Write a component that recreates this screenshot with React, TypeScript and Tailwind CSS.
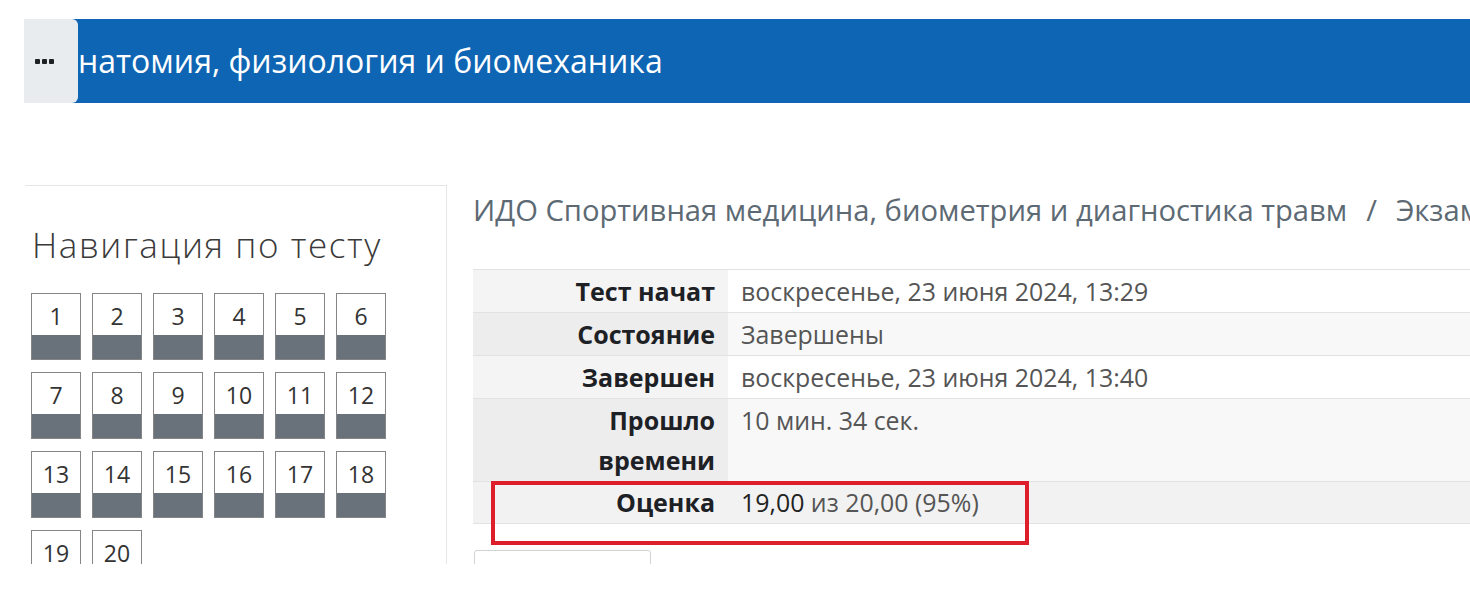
const questions = Array.from({ length: 20 }, (_, i) => i + 1);

const rows = [
  { label: ["Тест начат"], value: "воскресенье, 23 июня 2024, 13:29", lbg: "bg-[#f4f4f4]", vbg: "bg-white" },
  { label: ["Состояние"], value: "Завершены", lbg: "bg-[#ededed]", vbg: "bg-[#f8f8f8]" },
  { label: ["Завершен"], value: "воскресенье, 23 июня 2024, 13:40", lbg: "bg-[#f4f4f4]", vbg: "bg-white" },
  { label: ["Прошло", "времени"], value: "10 мин. 34 сек.", lbg: "bg-[#ededed]", vbg: "bg-[#f8f8f8]" },
];

const App = () => {
  return (
    <div className="w-[1470px] h-[600px] bg-white overflow-hidden font-['Open_Sans',sans-serif]">
      <div className="pt-[19px] pl-[24px]">
        <div className="h-[84px] bg-[#0e65b4] flex items-center">
          <div className="w-[54px] h-full bg-[#e9ecef] rounded-r-[6px] flex items-center pl-[11px] gap-[2px]">
            <span className="w-[5px] h-[5px] rounded-[1px] bg-[#1d2125]"></span>
            <span className="w-[5px] h-[5px] rounded-[1px] bg-[#1d2125]"></span>
            <span className="w-[5px] h-[5px] rounded-[1px] bg-[#1d2125]"></span>
          </div>
          <h1 className="text-white text-[32px] leading-[40px] whitespace-nowrap">
            натомия, физиология и биомеханика
          </h1>
        </div>
      </div>

      <div className="mt-[82px] h-[379px] overflow-hidden flex">
        <aside className="ml-[25px] w-[422px] shrink-0 border-t border-r border-[#e6e6e6]">
          <h2 className="mt-[38px] pl-[7px] text-[35px] leading-[42px] tracking-[1.6px] font-light text-[#3a3a3a] whitespace-nowrap">
            Навигация по тесту
          </h2>
          <div className="mt-[27px] ml-[6px] grid grid-cols-[repeat(6,50px)] gap-x-[11px] gap-y-[12px]">
            {questions.map((n) => (
              <div key={n} className="w-[50px] h-[67px] border border-[#858585] flex flex-col">
                <div className="flex-1 flex items-center justify-center pt-[4px] text-[23px] text-[#333]">{n}</div>
                <div className="h-[24px] bg-[#69727a]"></div>
              </div>
            ))}
          </div>
        </aside>

        <main className="ml-[26px] flex-1 min-w-0 relative">
          <div className="mt-[5px] text-[29.2px] leading-[40px] text-[#5d6a74] whitespace-nowrap">
            ИДО Спортивная медицина, биометрия и диагностика травм
            <span className="mx-[19px]">/</span>
            Экзамен
          </div>

          <div className="mt-[39px] border-b border-[#e2e2e2] text-[24.9px]">
            {rows.map((r, i) => (
              <div key={i} className="flex border-t border-[#e2e2e2]">
                <div className={`w-[255px] shrink-0 ${r.lbg} py-px pr-[13px] text-right text-[25px] font-bold leading-[40px] text-[#1d2125]`}>
                  {r.label.map((l) => (
                    <div key={l}>{l}</div>
                  ))}
                </div>
                <div className={`flex-1 ${r.vbg} py-px pl-[13px] leading-[40px] text-[#555]`}>{r.value}</div>
              </div>
            ))}
            <div className="flex border-t border-[#e2e2e2] bg-[#f2f2f2]">
              <div className="w-[255px] shrink-0 py-px pr-[13px] text-right text-[25px] font-bold leading-[39px] text-[#1d2125]">
                Оценка
              </div>
              <div className="flex-1 py-px pl-[13px] leading-[39px] text-[#555]">
                <span className="text-[#222]">19,00</span> из 20,00 (95%)
              </div>
            </div>
          </div>

          <div className="mt-[26px] ml-px w-[177px] h-[40px] border border-[#d2d2d2] rounded-t-[3px]"></div>

          <div className="absolute left-[18px] top-[296px] w-[538px] h-[64px] border-4 border-[#dc1f2a]"></div>
        </main>
      </div>
    </div>
  );
};

export default App;
